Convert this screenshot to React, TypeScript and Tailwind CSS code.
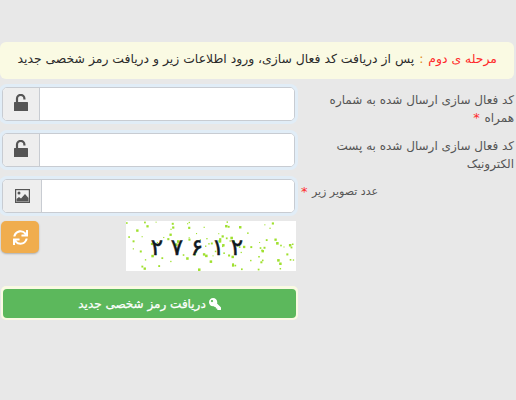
import React from "react";
import { FaSync, FaKey } from "react-icons/fa";

const dots: [number, number, number][] = [];
let seed = 23;
const rnd = () => {
  seed = (seed * 16807) % 2147483647;
  return seed / 2147483647;
};
for (let i = 0; i < 105; i++) {
  const a = rnd();
  const b = rnd();
  dots.push([a * 168, b * 48, rnd() * 1.6 + 1]);
}

const digits: [string, number][] = [
  ["۲", 31],
  ["۷", 51],
  ["۶", 71],
  ["۱", 92],
  ["۲", 111],
];

function Captcha() {
  return (
    <svg width="170" height="50" viewBox="0 0 170 50" className="block bg-white">
      {dots.map((d, i) => (
        <rect key={i} x={d[0]} y={d[1]} width={d[2]} height={d[2]} fill="#9fe02e" />
      ))}
      {digits.map(([c, x], i) => (
        <text
          key={i}
          x={x}
          y="34"
          textAnchor="middle"
          fontFamily="'DejaVu Sans', sans-serif"
          fontSize="23"
          fill="#101820"
          stroke="#101820"
          strokeWidth="0.5"
        >
          {c}
        </text>
      ))}
    </svg>
  );
}

function UnlockIcon() {
  return (
    <svg width="14" height="17" viewBox="0 0 14 17" className="mb-[3px]">
      <path d="M3 9V4.6a3.7 3.7 0 0 1 7.4 0v0.8" fill="none" stroke="#555555" strokeWidth="2.2" />
      <rect x="0" y="8" width="14" height="9" rx="0.5" fill="#555555" />
    </svg>
  );
}

function ImageIcon() {
  return (
    <svg width="15" height="14" viewBox="0 0 15 14" className="mb-[1px]">
      <rect x="0" y="0" width="15" height="14" fill="#555555" />
      <rect x="1.2" y="1.2" width="12.6" height="11.6" fill="#eeeeee" />
      <circle cx="4" cy="4" r="1.5" fill="#555555" />
      <path d="M1.5 12.5V10l2.5-2 2 1.5L10 5l3.5 4v3.5z" fill="#555555" />
    </svg>
  );
}

export default function App() {
  const fields = [
    { label: "کد فعال سازی ارسال شده به شماره همراه", star: true, icon: <UnlockIcon />, w: "w-[37px]", pad: "pr-[2px] pl-[24px] text-[12px]" },
    { label: "کد فعال سازی ارسال شده به پست الکترونیک", star: false, icon: <UnlockIcon />, w: "w-[37px]", pad: "pr-[2px] pl-[24px] text-[12px]" },
    { label: "عدد تصویر زیر", star: true, icon: <ImageIcon />, w: "w-[39px]", pad: "pr-[138px] text-[11px]" },
  ];
  return (
    <div
      dir="rtl"
      className="h-[400px] w-[516px] overflow-hidden bg-[#e8e8e8] pt-[42px] font-['DejaVu_Sans',sans-serif] text-[#555555]"
    >
      <div className="mr-[2px] flex h-[37px] items-center whitespace-nowrap rounded-[6px] bg-[#fafae3] pb-[2px] pr-[17px] text-[12.4px] text-[#2b2b2b]">
        <span className="text-[#ff2a2a]">مرحله ی دوم</span>
        <span className="mx-[5px] text-[#e08a20]">:</span>
        <span>پس از دریافت کد فعال سازی، ورود اطلاعات زیر و دریافت رمز شخصی جدید</span>
      </div>

      <div className="mt-[8px] flex flex-col gap-[12px]">
        {fields.map((f, i) => (
          <div key={i} className="flex h-[34px] items-start">
            <div className={`w-[221px] shrink-0 pt-[4px] leading-[18px] text-[#555555] ${f.pad}`}>
              {f.label}{" "}
              {f.star && <span className="mx-[1px] inline-block align-top text-[13px] leading-[18px] text-[#ff2a2a]">*</span>}
            </div>
            <div className="flex h-[34px] w-[293px] shrink-0 overflow-hidden rounded-[5px] border border-[#c8ccd2] bg-white shadow-[0_0_0_3px_#e1edf7]">
              <div className="flex-1 bg-white" />
              <div className={`flex shrink-0 items-center justify-center border-r border-[#c8ccd2] bg-[#eeeeee] ${f.w}`}>
                {f.icon}
              </div>
            </div>
          </div>
        ))}
      </div>

      <div className="mt-[8px] flex h-[50px] items-start">
        <div className="w-[220px] shrink-0" />
        <div className="flex w-[295px] shrink-0 items-start justify-between">
          <Captcha />
          <button className="flex h-[32px] w-[38px] items-center justify-center rounded-[5px] bg-[#f0ad4e] text-[15px] text-white shadow-[0_1px_2px_rgba(0,0,0,0.25)]">
            <FaSync />
          </button>
        </div>
      </div>

      <div className="mt-[15px] flex">
        <div className="w-[218px] shrink-0" />
        <div className="w-[297px] rounded-[5px] bg-[#fafae3] pb-[2px] pl-[2px] pr-[2px] pt-[3px]">
          <button className="flex h-[29px] w-full items-center justify-center gap-[3px] rounded-[4px] bg-[#5cb85c] text-[12px] font-normal text-white [-webkit-text-stroke:0.25px_white]">
            <FaKey className="scale-x-[-1] text-[12px]" />
            <span>دریافت رمز شخصی جدید</span>
          </button>
        </div>
      </div>
    </div>
  );
}
